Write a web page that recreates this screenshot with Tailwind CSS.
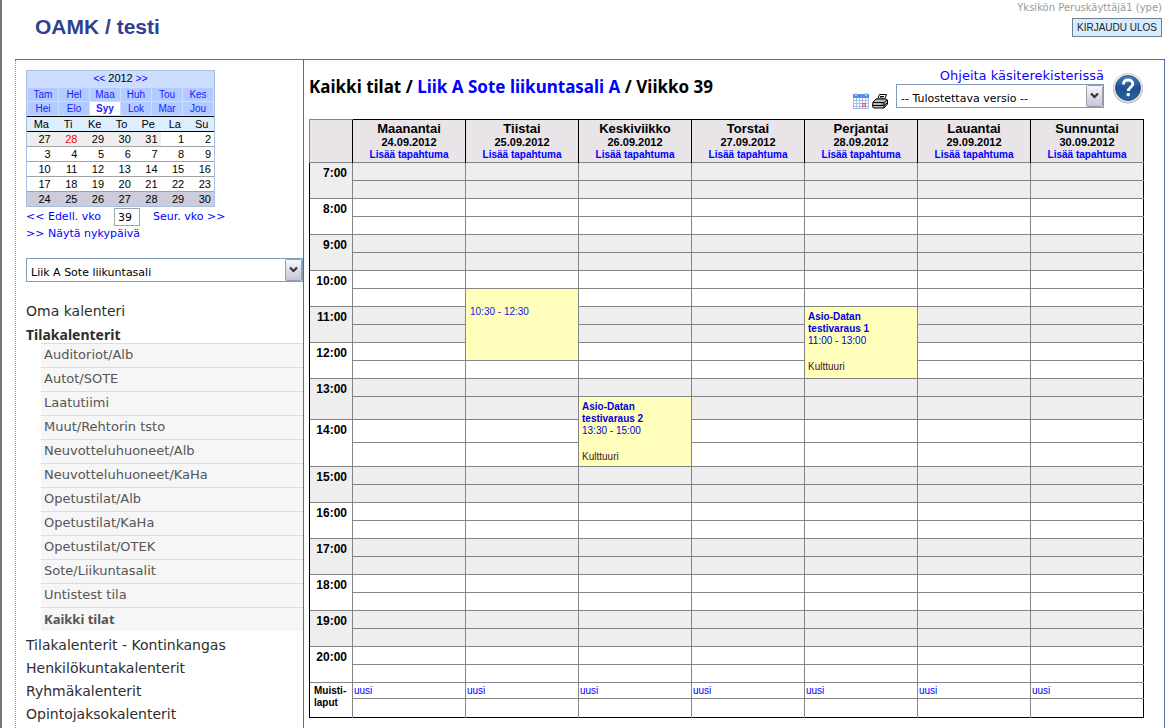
<!DOCTYPE html>
<html lang="fi">
<head>
<meta charset="utf-8">
<title>OAMK / testi</title>
<script src="https://cdn.jsdelivr.net/npm/@tailwindcss/browser@4"></script>
</head>
<body class="min-h-screen flex flex-col bg-white text-black border-l-2 border-[#75747c] font-['DejaVu_Sans',Verdana,sans-serif]">
<header class="h-[59px] flex justify-between pl-[33px] pr-[14px]">
  <h1 class="mt-[14px] text-[21px] leading-[26px] font-bold text-[#2f3f92] font-['Liberation_Sans',Arial,sans-serif]">OAMK / testi</h1>
  <div class="flex flex-col items-end pt-[2px]">
    <span class="text-[10px] leading-[12px] text-[#9a9a9a]">Yksikön Peruskäyttäjä1 (ype)</span>
    <button class="mt-[4px] h-[19px] px-[4px] border border-[#6f8294] bg-[#d9ecff] text-[10px] leading-[16px] text-[#222] font-['Liberation_Sans',Arial,sans-serif]">KIRJAUDU ULOS</button>
  </div>
</header>
<div class="flex-1 flex ml-[13px] mr-[11px] border-t border-r border-[#5a69ac]">
  <aside class="w-[289px] shrink-0 pl-[10px] pt-[10px] border-l border-r border-l-[#8f8fd0] border-r-[#5a69ac] [border-left-style:dotted]">
    <section class="w-[189px] border border-[#a9bddc] bg-[#ccddff] text-[11px] font-['Liberation_Sans',Arial,sans-serif]">
      <div class="h-[17px] leading-[15px] text-center"><a href="#" class="text-[#0000ee] text-[10px]">&lt;&lt;</a> 2012 <a href="#" class="text-[#0000ee] text-[10px]">&gt;&gt;</a></div>
      <nav class="grid grid-cols-6 gap-px px-px pb-px text-[10px] leading-[13px] text-center text-[#1a1aff] [&>a]:bg-[#b3ccff]">
        <a href="#">Tam</a><a href="#">Hel</a><a href="#">Maa</a><a href="#">Huh</a><a href="#">Tou</a><a href="#">Kes</a>
        <a href="#">Hei</a><a href="#">Elo</a><a href="#" class="bg-white! font-bold">Syy</a><a href="#">Lok</a><a href="#">Mar</a><a href="#">Jou</a>
      </nav>
      <table class="w-full table-fixed border-separate border-spacing-0 bg-white leading-[14px] text-right [&_td]:pr-[3px] [&_th]:font-normal">
        <thead class="bg-[#ddeeff] text-center [&_th]:border-y [&_th]:border-black [&_th]:pl-[2px]">
          <tr><th>Ma</th><th>Ti</th><th>Ke</th><th>To</th><th>Pe</th><th>La</th><th>Su</th></tr>
        </thead>
        <tbody class="[&>tr+tr>td]:border-t [&_td]:border-[#a3a3a3]">
          <tr><td class="bg-[#eee]">27</td><td class="bg-[#eee] text-[#ff0000]">28</td><td class="bg-[#eee]">29</td><td class="bg-[#eee]">30</td><td class="bg-[#eee]">31</td><td>1</td><td>2</td></tr>
          <tr><td>3</td><td>4</td><td>5</td><td>6</td><td>7</td><td>8</td><td>9</td></tr>
          <tr><td>10</td><td>11</td><td>12</td><td>13</td><td>14</td><td>15</td><td>16</td></tr>
          <tr><td>17</td><td>18</td><td>19</td><td>20</td><td>21</td><td>22</td><td>23</td></tr>
          <tr class="bg-[#ccccdd]"><td>24</td><td>25</td><td>26</td><td>27</td><td>28</td><td>29</td><td>30</td></tr>
        </tbody>
      </table>
    </section>
    <div class="mt-px flex items-center text-[11px] text-[#0000ff]">
      <a href="#" class="w-[88px]">&lt;&lt; Edell. vko</a>
      <input aria-label="Viikko" value="39" class="w-[26px] h-[18px] px-[3px] border border-[#9aa9ad] bg-white text-black">
      <a href="#" class="ml-[13px]">Seur. vko &gt;&gt;</a>
    </div>
    <a href="#" class="block text-[11px] leading-[16px] text-[#0000ff]">&gt;&gt; Näytä nykypäivä</a>
    <div class="relative mt-[16px] h-[24px]">
      <select aria-label="Tila" class="appearance-none w-full h-full pl-[4px] pt-[6px] border border-[#7f9db9] bg-white text-[11px] text-black"><option>Liik A Sote liikuntasali</option></select>
      <svg class="absolute right-px top-px pointer-events-none" width="17" height="22" viewBox="0 0 17 22"><defs><linearGradient id="g" x1="0" y1="0" x2="0" y2="1"><stop offset="0" stop-color="#f8f8fc"/><stop offset="1" stop-color="#c4c4d6"/></linearGradient></defs><rect x=".5" y=".5" width="16" height="21" rx="1" fill="url(#g)" stroke="#9a9ab0"/><path d="M5 8.500l3.500 3.500 3.500-3.500" fill="none" stroke="#333" stroke-width="2.200"/></svg>
    </div>
    <nav class="mt-[18px] text-[14px] leading-[23px] text-[#2e2e2e] [&>a]:block">
      <a href="#">Oma kalenteri</a>
      <a href="#" class="h-[20px] font-bold font-['Noto_Sans',Tahoma,sans-serif]">Tilakalenterit</a>
      <ul class="ml-[15px] mb-[3px] text-[13px] leading-[22px] text-[#555] [&>li]:h-[24px] [&>li]:pl-[3px] [&>li]:bg-[#f6f6f6] [&>li]:border-t [&>li]:border-[#dcdcdc]">
        <li><a href="#">Auditoriot/Alb</a></li>
        <li><a href="#">Autot/SOTE</a></li>
        <li><a href="#">Laatutiimi</a></li>
        <li><a href="#">Muut/Rehtorin tsto</a></li>
        <li><a href="#">Neuvotteluhuoneet/Alb</a></li>
        <li><a href="#">Neuvotteluhuoneet/KaHa</a></li>
        <li><a href="#">Opetustilat/Alb</a></li>
        <li><a href="#">Opetustilat/KaHa</a></li>
        <li><a href="#">Opetustilat/OTEK</a></li>
        <li><a href="#">Sote/Liikuntasalit</a></li>
        <li><a href="#">Untistest tila</a></li>
        <li class="font-bold font-['Noto_Sans',Tahoma,sans-serif]"><a href="#">Kaikki tilat</a></li>
      </ul>
      <a href="#">Tilakalenterit - Kontinkangas</a>
      <a href="#">Henkilökuntakalenterit</a>
      <a href="#">Ryhmäkalenterit</a>
      <a href="#">Opintojaksokalenterit</a>
    </nav>
  </aside>
  <main class="flex-1 min-w-0 pl-[5px] pr-[20px]">
    <div class="h-[59px] flex justify-between">
      <h2 class="mt-[16px] text-[17px] leading-[22px] font-bold whitespace-nowrap font-['Noto_Sans',Tahoma,sans-serif]">Kaikki tilat / <a href="#" class="text-[#0000ff]">Liik A Sote liikuntasali A</a> / Viikko 39</h2>
      <div class="flex">
        <div class="flex gap-[3px] pt-[33px] mr-[8px]">
          <a href="#" aria-label="Kalenteri"><svg width="16" height="16" viewBox="0 0 16 16" shape-rendering="crispEdges"><path fill="#fff" d="M0 0h16v16H0z"/><path fill="#5b8def" d="M0 1h16v4H0z"/><path fill="#a9c5ff" d="M2 0h2v3H2zM12 0h2v3h-2z"/><path d="M.5 5v10.500h15V5M3.500 5v10M6.500 5v10M9.500 5v10M12.500 5v10M0 7.500h16M0 10.500h16M0 13.500h16" fill="none" stroke="#a6bfe8"/><path d="M9.500 10.500h3v3h-3z" fill="#fbb" stroke="#f05a50"/></svg></a>
          <a href="#" aria-label="Tulosta"><svg width="16" height="16" viewBox="0 0 16 16"><path d="M5.500 6.500l2-5h7l-2 5z" fill="#fff" stroke="#000"/><path d="M8 3.500h4M7.500 5h4" stroke="#000"/><path d="M1 9l3-3h10l1.500 1v4L12 15H1.500L.5 13.500z" fill="#bbb" stroke="#000"/><path d="M1 9.500h11L15 7M1 12.500h11l3-2.500M12 9.500V15" fill="none" stroke="#000"/><path d="M9 10.500h2v1H9z" fill="#e22"/></svg></a>
        </div>
        <div class="w-[208px] flex flex-col pt-[8px]">
          <a href="#" class="self-end text-[13px] leading-[16px] whitespace-nowrap text-[#1500ff]">Ohjeita käsiterekisterissä</a>
          <div class="relative h-[24px]">
            <select aria-label="Versio" class="appearance-none w-full h-full pl-[4px] pt-[6px] border border-[#7f9db9] bg-white text-[11px] text-black"><option>-- Tulostettava versio --</option></select>
            <svg class="absolute right-px top-px pointer-events-none" width="17" height="22" viewBox="0 0 17 22"><rect x=".5" y=".5" width="16" height="21" rx="1" fill="url(#g)" stroke="#9a9ab0"/><path d="M5 8.500l3.500 3.500 3.500-3.500" fill="none" stroke="#333" stroke-width="2.200"/></svg>
          </div>
        </div>
        <a href="#" aria-label="Ohje" class="ml-[8px] mt-[12px]"><svg width="32" height="32" viewBox="0 0 32 32"><defs><linearGradient id="h" x1="0" y1="0" x2="0" y2="1"><stop offset="0" stop-color="#4d80bb"/><stop offset=".5" stop-color="#1e4f92"/><stop offset="1" stop-color="#2b62a6"/></linearGradient></defs><circle cx="16" cy="16.500" r="15" fill="#aeb2b8"/><circle cx="16" cy="15.800" r="14.500" fill="#f0f1f3" stroke="#c8cbd0" stroke-width=".8"/><circle cx="16" cy="16" r="12.500" fill="url(#h)" stroke="#17386b" stroke-width=".8"/><path d="M11.500 12.500c0-3 2-4.500 4.700-4.500s4.600 1.600 4.600 4c0 3.300-4.500 3.500-4.500 7" fill="none" stroke="#fff" stroke-width="2.800"/><circle cx="16.200" cy="22.600" r="1.800" fill="#fff"/></svg></a>
      </div>
    </div>
    <table class="w-full table-fixed border-collapse border border-black font-['Liberation_Sans',Arial,sans-serif] text-[10px] leading-[12px] [&_td]:border-t [&_td]:border-l [&_td]:border-[#848484] [&_td]:p-0 [&>tbody_th]:border-t [&>tbody_th]:border-l [&>tbody_th]:border-t-[#848484] [&>tbody_th]:border-l-black [&>tbody_th]:text-[12px] [&>tbody_th]:leading-[14px] [&>tbody_th]:align-top [&>tbody_th]:text-right [&>tbody_th]:pt-[3px] [&>tbody_th]:pr-[5px] [&>tbody:nth-of-type(odd)]:bg-[#eee]">
      <colgroup><col class="w-[43px]"><col><col><col><col><col><col><col></colgroup>
      <thead class="bg-[#e8e4e8]">
        <tr class="h-[43px] [&>*]:border-l [&>*]:border-t [&>*]:border-black [&>*]:p-0 [&_b]:block [&_b]:text-[13px] [&_b]:leading-[15px] [&_span]:block [&_span]:text-[11px] [&_span]:leading-[13px] [&_a]:block [&_a]:text-[#0000ff]">
          <td></td>
          <th><b>Maanantai</b><span>24.09.2012</span><a href="#">Lisää tapahtuma</a></th>
          <th><b>Tiistai</b><span>25.09.2012</span><a href="#">Lisää tapahtuma</a></th>
          <th><b>Keskiviikko</b><span>26.09.2012</span><a href="#">Lisää tapahtuma</a></th>
          <th><b>Torstai</b><span>27.09.2012</span><a href="#">Lisää tapahtuma</a></th>
          <th><b>Perjantai</b><span>28.09.2012</span><a href="#">Lisää tapahtuma</a></th>
          <th><b>Lauantai</b><span>29.09.2012</span><a href="#">Lisää tapahtuma</a></th>
          <th><b>Sunnuntai</b><span>30.09.2012</span><a href="#">Lisää tapahtuma</a></th>
        </tr>
      </thead>
      <tbody>
        <tr class="h-[18px]"><th rowspan="2">7:00</th><td></td><td></td><td></td><td></td><td></td><td></td><td></td></tr>
        <tr class="h-[18px]"><td></td><td></td><td></td><td></td><td></td><td></td><td></td></tr>
      </tbody>
      <tbody>
        <tr class="h-[18px]"><th rowspan="2">8:00</th><td></td><td></td><td></td><td></td><td></td><td></td><td></td></tr>
        <tr class="h-[18px]"><td></td><td></td><td></td><td></td><td></td><td></td><td></td></tr>
      </tbody>
      <tbody>
        <tr class="h-[18px]"><th rowspan="2">9:00</th><td></td><td></td><td></td><td></td><td></td><td></td><td></td></tr>
        <tr class="h-[18px]"><td></td><td></td><td></td><td></td><td></td><td></td><td></td></tr>
      </tbody>
      <!-- Bookings span several half-hour rows, so these hours share one row group -->
      <tbody class="bg-white! [&>.shade]:bg-[#eee]">
        <tr class="h-[18px]"><th rowspan="2">10:00</th><td></td><td></td><td></td><td></td><td></td><td></td><td></td></tr>
        <tr class="h-[18px]"><td></td><td rowspan="4" class="bg-[#ffffbb] align-top"><div class="pl-[4px] pt-[17px]"><a href="#" class="text-[#1414e6]">10:30 - 12:30</a></div></td><td></td><td></td><td></td><td></td><td></td></tr>
        <tr class="shade h-[18px]"><th rowspan="2">11:00</th><td></td><td></td><td></td><td rowspan="4" class="bg-[#ffffbb] align-top"><div class="pl-[3px] pt-[4px]"><a href="#" class="text-[#0000dd]"><strong>Asio-Datan<br>testivaraus 1</strong><br>11:00 - 13:00</a><p class="mt-[14px] text-[#4a1030]">Kulttuuri</p></div></td><td></td><td></td></tr>
        <tr class="shade h-[18px]"><td></td><td></td><td></td><td></td><td></td></tr>
        <tr class="h-[18px]"><th rowspan="2">12:00</th><td></td><td></td><td></td><td></td><td></td></tr>
        <tr class="h-[18px]"><td></td><td></td><td></td><td></td><td></td><td></td></tr>
        <tr class="shade h-[18px]"><th rowspan="2">13:00</th><td></td><td></td><td></td><td></td><td></td><td></td><td></td></tr>
        <tr class="shade h-[23px]"><td></td><td></td><td rowspan="3" class="bg-[#ffffbb] align-top"><div class="pl-[3px] pt-[4px]"><a href="#" class="text-[#0000dd]"><strong>Asio-Datan<br>testivaraus 2</strong><br>13:30 - 15:00</a><p class="mt-[14px] text-[#4a1030]">Kulttuuri</p></div></td><td></td><td></td><td></td><td></td></tr>
        <tr class="h-[23px]"><th rowspan="2">14:00</th><td></td><td></td><td></td><td></td><td></td><td></td></tr>
        <tr class="h-[24px]"><td></td><td></td><td></td><td></td><td></td><td></td></tr>
      </tbody>
      <tbody>
        <tr class="h-[18px]"><th rowspan="2">15:00</th><td></td><td></td><td></td><td></td><td></td><td></td><td></td></tr>
        <tr class="h-[18px]"><td></td><td></td><td></td><td></td><td></td><td></td><td></td></tr>
      </tbody>
      <tbody>
        <tr class="h-[18px]"><th rowspan="2">16:00</th><td></td><td></td><td></td><td></td><td></td><td></td><td></td></tr>
        <tr class="h-[18px]"><td></td><td></td><td></td><td></td><td></td><td></td><td></td></tr>
      </tbody>
      <tbody>
        <tr class="h-[18px]"><th rowspan="2">17:00</th><td></td><td></td><td></td><td></td><td></td><td></td><td></td></tr>
        <tr class="h-[18px]"><td></td><td></td><td></td><td></td><td></td><td></td><td></td></tr>
      </tbody>
      <tbody>
        <tr class="h-[18px]"><th rowspan="2">18:00</th><td></td><td></td><td></td><td></td><td></td><td></td><td></td></tr>
        <tr class="h-[18px]"><td></td><td></td><td></td><td></td><td></td><td></td><td></td></tr>
      </tbody>
      <tbody>
        <tr class="h-[18px]"><th rowspan="2">19:00</th><td></td><td></td><td></td><td></td><td></td><td></td><td></td></tr>
        <tr class="h-[18px]"><td></td><td></td><td></td><td></td><td></td><td></td><td></td></tr>
      </tbody>
      <tbody>
        <tr class="h-[18px]"><th rowspan="2">20:00</th><td></td><td></td><td></td><td></td><td></td><td></td><td></td></tr>
        <tr class="h-[18px]"><td></td><td></td><td></td><td></td><td></td><td></td><td></td></tr>
      </tbody>
      <tfoot class="[&_a]:block [&_a]:pl-px [&_a]:text-[#0000ff]">
        <tr class="h-[16px]"><th rowspan="2" class="border-t border-l border-t-[#848484] border-l-black p-0 pt-[2px] pl-[4px] text-left align-top">Muisti-<br>laput</th><td><a href="#">uusi</a></td><td><a href="#">uusi</a></td><td><a href="#">uusi</a></td><td><a href="#">uusi</a></td><td><a href="#">uusi</a></td><td><a href="#">uusi</a></td><td><a href="#">uusi</a></td></tr>
        <tr class="h-[19px]"><td></td><td></td><td></td><td></td><td></td><td></td><td></td></tr>
      </tfoot>
    </table>
  </main>
</div>
</body>
</html>
